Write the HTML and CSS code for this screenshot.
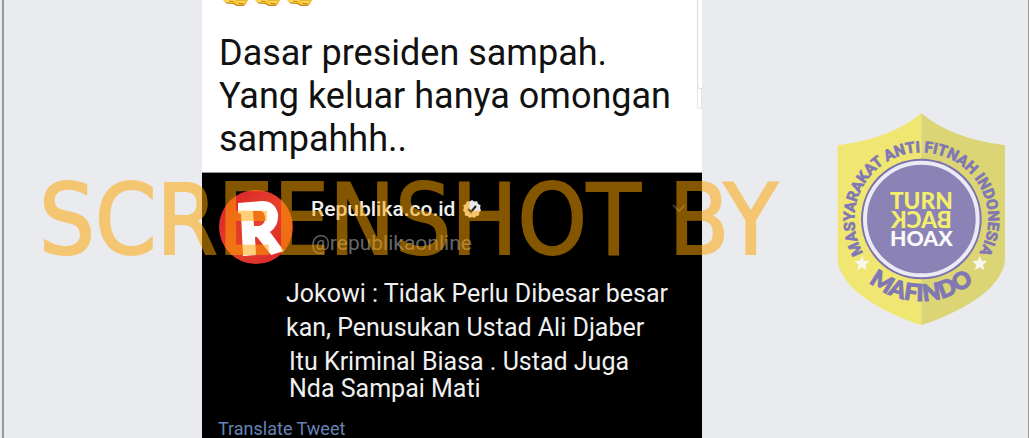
FILE: index.html
```html
<!DOCTYPE html>
<html lang="id">
<head>
    <meta charset="UTF-8">
    <meta name="viewport" content="width=device-width, initial-scale=1.0">
    <title>Turn Back Hoax</title>
    <link rel="stylesheet" href="styles.css">
</head>
<body>

    <main class="page">
        <article class="post">
            <section class="status">
                <svg class="fists" viewBox="0 0 96 7" aria-hidden="true">
                    <defs>
                        <g id="fist">
                            <path d="M2 0h25l-3 5.500H15L11 3.500 5 3z" fill="#f3b32c"/>
                            <path d="M3 0h12l-1 3-9-1zM16 1h9l-2 3h-8z" fill="#fdd74e"/>
                            <path d="M5 3l7 .5 4 2h7M8 1l5 1M17 3l6 1" fill="none" stroke="#b77616" stroke-width=".8"/>
                        </g>
                    </defs>
                    <use href="#fist"/>
                    <use href="#fist" x="32"/>
                    <use href="#fist" x="64"/>
                </svg>
                <p class="status-text">Dasar presiden sampah.<br>Yang keluar hanya omongan<br>sampahhh..</p>
                <div class="side-card"></div>
            </section>

            <section class="tweet">
                <header class="tweet-header">
                    <svg class="avatar" viewBox="0 0 76 76" role="img" aria-label="Republika">
                        <defs>
                            <linearGradient id="red" x1="0" y1="0" x2="1" y2="1">
                                <stop offset="0" stop-color="#d91f2c"/>
                                <stop offset=".5" stop-color="#e5412b"/>
                                <stop offset="1" stop-color="#d9202d"/>
                            </linearGradient>
                        </defs>
                        <circle cx="38" cy="37" r="37" fill="url(#red)"/>
                        <path fill="#fff" fill-rule="evenodd" d="M20 13L44 11Q57 11 60 24Q61 36 52 42L66 61L53 65L39 47L37 47L38 65L25 66L23 24L20 23ZM35 21L36 36L41 36Q48 34 47 27Q46 20 41 21Z"/>
                    </svg>
                    <div class="author">
                        <div class="name">Republika.co.id
                            <svg class="verified" viewBox="0 0 18 18" aria-hidden="true">
                                <path fill="#e8e8e8" d="M9 0l2.3 1.6 2.8-.3 1 2.6 2.5 1.3-.5 2.8L18 10.500l-1.800 2.100-.1 2.800-2.800.6L11.300 18 9 16.700 6.700 18l-2-2-2.800-.6-.1-2.800L0 10.500 .9 8 .4 5.200l2.500-1.300 1-2.600 2.800.3z"/>
                                <path d="M5 9l3 3 5-6" fill="none" stroke="#222" stroke-width="2"/>
                            </svg>
                        </div>
                        <div class="handle">@republikaonline</div>
                    </div>
                    <svg class="chevron" viewBox="0 0 14 10" aria-hidden="true">
                        <path d="M1 2l6 6 6-6" fill="none" stroke="#393939" stroke-width="2"/>
                    </svg>
                </header>
                <p class="tweet-text">Jokowi : Tidak Perlu Dibesar besar<br>kan, Penusukan Ustad Ali Djaber</p>
                <p class="tweet-text tweet-text-close">Itu Kriminal Biasa . Ustad Juga<br>Nda Sampai Mati</p>
                <a class="translate" href="#">Translate Tweet</a>
            </section>
        </article>

        <svg class="badge" viewBox="0 0 612 690" role="img" aria-label="Mafindo">
            <defs>
                <path id="arc-top" d="M142 480A201 201 0 1 1 436 480"/>
                <path id="arc-bottom" d="M43 342A246 246 0 0 0 535 342"/>
            </defs>
            <path fill="#f0e773" d="M289 25Q198 101 38 121V462Q38 500 82 548Q148 612 289 661Z"/>
            <path fill="#dbd575" d="M289 25Q380 101 540 121V462Q540 500 496 548Q430 612 289 661Z"/>
            <circle cx="289" cy="342" r="181" fill="#7b72ad"/>
            <circle cx="289" cy="342" r="169" fill="#8b82b5" stroke="#eceaf4" stroke-width="12"/>
            <text class="ring-text"><textPath href="#arc-top" startOffset="50%">MASYARAKAT ANTI FITNAH INDONESIA</textPath></text>
            <text class="mafindo"><textPath href="#arc-bottom" startOffset="50%">MAFINDO</textPath></text>
            <g class="slogan">
                <text x="289" y="312">TURN</text>
                <text x="-289" y="369" transform="scale(-1 1)">BACK</text>
                <text class="hoax" x="289" y="423">HOAX</text>
            </g>
            <g fill="#f7f7f0">
                <path id="star" d="M111 452l6 15 17 1-13 11 4 17-14-9-14 9 4-17-13-11 17-1z"/>
                <use href="#star" x="353"/>
            </g>
        </svg>

        <div class="watermark">SCREENSHOT BY</div>
    </main>

</body>
</html>
```

FILE: styles.css
```css
body {
    margin: 0;
    background-color: #e9ebee;
    font-family: Roboto, "Noto Sans", sans-serif;
}

.page {
    position: relative;
    display: grid;
    grid-template-columns: minmax(0, 198fr) 500px minmax(0, 326fr);
    min-height: 100vh;
    box-sizing: border-box;
    margin-left: 2px;
    border-left: 2px solid #999;
    border-right: 1px solid #999;
    overflow: hidden;
}

.post {
    grid-column: 2;
    display: flex;
    flex-direction: column;
    background-color: #000;
}

.status {
    position: relative;
    padding: 0 17px 11px;
    background-color: #fff;
    border-bottom: 1px solid #999;
}

.fists {
    display: block;
    width: 96px;
    height: 7px;
    margin-left: 2px;
}

.status-text {
    margin: 25px 0 0;
    font-size: 36px;
    line-height: 43px;
    color: #111;
    white-space: nowrap;
}

/* edge of the next card, cut off by the post */
.side-card {
    position: absolute;
    top: 0;
    right: 0;
    width: 4px;
    height: 88px;
    border: 1px solid #ddd;
    border-width: 0 0 1px 1px;
    border-bottom-left-radius: 3px;
    box-shadow: 0 20px 0 -1px #fff, 0 20px 0 0 #e4e4e4;
}

.tweet {
    flex: 1;
    padding: 17px 16px 0;
    color: #f0f0f0;
}

.tweet-header {
    display: flex;
    gap: 17px;
}

.avatar {
    width: 76px;
    height: 76px;
}

.author {
    flex: 1;
    padding-top: 2px;
}

.name {
    font-size: 21px;
    font-weight: 500;
    line-height: 34px;
}

.verified {
    width: 18px;
    height: 18px;
    margin-left: 2px;
    vertical-align: -2px;
}

.handle {
    font-size: 21px;
    line-height: 34px;
    color: #666;
}

.chevron {
    width: 14px;
    height: 10px;
    margin-top: 13px;
}

.tweet-text {
    margin: 11px 0 0 68px;
    font-size: 25px;
    line-height: 34px;
    white-space: nowrap;
}

.tweet-text-close {
    margin: 3px 0 0 71px;
    line-height: 27px;
}

.translate {
    display: block;
    margin-top: 16px;
    font-size: 18px;
    line-height: 22px;
    color: #6682b4;
    text-decoration: none;
}

.badge {
    grid-column: 3;
    width: 204px;
    height: 230px;
    margin-top: 105px;
    margin-right: -1px;
    justify-self: end;
}

.badge text {
    text-anchor: middle;
    fill: #8077b4;
}

.ring-text {
    font-family: Roboto, sans-serif;
    font-size: 46px;
    font-weight: 700;
    stroke: #8077b4;
    stroke-width: 2px;
}

.mafindo {
    font-family: Lato, sans-serif;
    font-size: 70px;
    font-weight: 900;
    stroke: #8077b4;
    stroke-width: 3px;
}

.slogan {
    font-family: Lato, sans-serif;
    font-size: 68px;
    font-weight: 900;
}

.badge .slogan text {
    fill: #f3ef6c;
}

.badge .slogan .hoax {
    fill: #fafafa;
    font-size: 64px;
}

.watermark {
    position: absolute;
    top: 50%;
    left: 35px;
    transform: translateY(-50%);
    font-family: "DejaVu Sans Condensed", "DejaVu Sans", sans-serif;
    font-size: 98px;
    line-height: 100px;
    color: #ffa500;
    -webkit-text-stroke: 2px #ffa500;
    opacity: 0.52;
    white-space: nowrap;
    pointer-events: none;
}
```
